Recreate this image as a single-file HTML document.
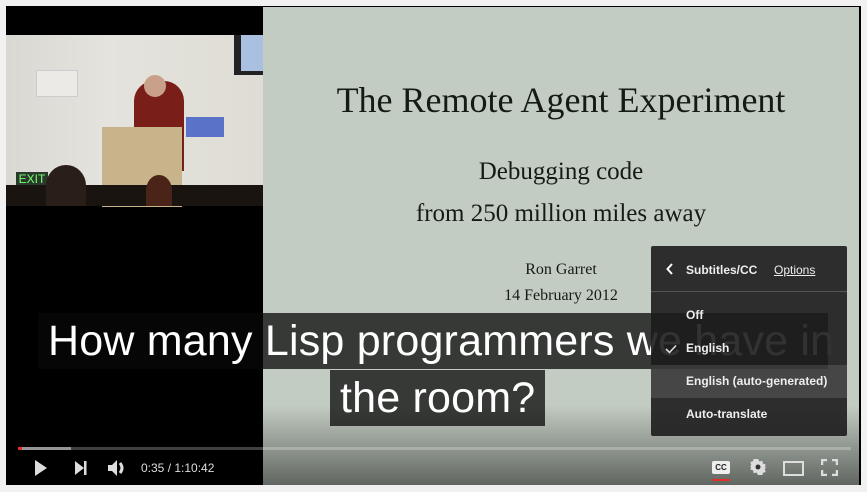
<!DOCTYPE html>
<html><head><style>
body{margin:0;width:867px;height:492px;background:#f1f1f1;position:relative;overflow:hidden;font-family:"Liberation Sans",sans-serif}
.v{position:absolute;left:6px;top:6px;width:855px;height:479px;background:#000;overflow:hidden}
.slide{position:absolute;left:257px;top:1px;width:596px;height:478px;background:#c3ccc3}
.cam{position:absolute;left:0;top:29px;width:257px;height:171px;background:linear-gradient(90deg,#d9d8d2 0,#e4e3dd 40%,#dedcd4 100%)}
.st{position:absolute;left:0;width:100%;text-align:center;font-family:"Liberation Serif",serif;color:#161a16}
.sub{position:absolute;background:rgba(8,8,8,.75);color:#fff;font-size:43px;line-height:56px;padding:0 10px;white-space:nowrap;letter-spacing:0.2px}
.grad{position:absolute;left:0;bottom:0;width:100%;height:80px;background:linear-gradient(rgba(0,0,0,0),rgba(0,0,0,.5))}
.menu{position:absolute;z-index:5;left:645px;top:240px;width:196px;height:190px;background:rgba(28,28,28,.9);color:#eee;font-size:12px;font-weight:bold;border-radius:2px}
.it{position:absolute;left:35px}
</style></head><body>
<div class="v">
 <div class="slide">
  <div class="st" style="top:72px;font-size:36px">The Remote Agent Experiment</div>
  <div class="st" style="top:151px;font-size:25px">Debugging code</div>
  <div class="st" style="top:193px;font-size:25px">from 250 million miles away</div>
  <div class="st" style="top:254px;font-size:16px">Ron Garret</div>
  <div class="st" style="top:280px;font-size:16px">14 February 2012</div>
 </div>
 <div class="cam">
  <div style="position:absolute;left:228px;top:0;width:29px;height:40px;background:#222"></div>
  <div style="position:absolute;left:235px;top:0;width:22px;height:36px;background:#a9c0e0"></div>
  <div style="position:absolute;left:30px;top:35px;width:40px;height:25px;background:#eceae6;border:1px solid #ccc"></div>
  <div style="position:absolute;left:128px;top:46px;width:50px;height:90px;background:#7a1e1a;border-radius:20px 20px 0 0"></div>
  <div style="position:absolute;left:138px;top:40px;width:22px;height:22px;background:#c9a08a;border-radius:50%"></div>
  <div style="position:absolute;left:96px;top:92px;width:80px;height:80px;background:#c8b48b"></div>
  <div style="position:absolute;left:180px;top:82px;width:38px;height:20px;background:#5a72c8"></div>
  <div style="position:absolute;left:10px;top:137px;width:32px;height:18px;background:#2a3a2a;color:#7f7;font-size:12px;text-align:center">EXIT</div>
  <div style="position:absolute;left:0;top:150px;width:257px;height:21px;background:#1a1410"></div>
  <div style="position:absolute;left:40px;top:130px;width:40px;height:41px;background:#2a1e18;border-radius:50% 50% 0 0"></div>
  <div style="position:absolute;left:140px;top:140px;width:26px;height:31px;background:#4a2418;border-radius:50% 50% 0 0"></div>
 </div>
 <div class="grad"></div>
 <div class="sub" style="left:32px;top:307px;width:770px">How many Lisp programmers we have in</div>
 <div class="sub" style="left:324px;top:364px">the room?</div>
 <div class="menu">
  <svg style="position:absolute;left:15px;top:17px" width="8" height="12"><path d="M6 1L1.5 6L6 11" stroke="#fff" stroke-width="2" fill="none"/></svg>
  <div class="it" style="top:17px">Subtitles/CC</div>
  <div style="position:absolute;left:123px;top:17px;text-decoration:underline;font-weight:normal">Options</div>
  <div style="position:absolute;left:0;top:45px;width:196px;height:1px;background:#555"></div>
  <div class="it" style="top:62px">Off</div>
  <svg style="position:absolute;left:14px;top:98px" width="12" height="10"><path d="M1 5L4.5 8.5L11 1.5" stroke="#ddd" stroke-width="1.6" fill="none"/></svg>
  <div class="it" style="top:95px">English</div>
  <div style="position:absolute;left:0;top:119px;width:196px;height:33px;background:rgba(255,255,255,.12)"></div>
  <div class="it" style="top:128px">English (auto-generated)</div>
  <div class="it" style="top:161px">Auto-translate</div>
 </div>
 <div style="position:absolute;left:12px;top:441px;width:833px;height:3px;background:rgba(255,255,255,.25)"></div>
 <div style="position:absolute;left:12px;top:441px;width:53px;height:3px;background:rgba(255,255,255,.45)"></div>
 <div style="position:absolute;left:12px;top:441px;width:4px;height:3px;background:#e52d27"></div>
 <svg style="position:absolute;left:28px;top:454px" width="14" height="16"><path d="M1 0L13 8L1 16Z" fill="#ddd"/></svg>
 <svg style="position:absolute;left:68px;top:455px" width="14" height="14"><path d="M1 0L10 7L1 14Z" fill="#ddd"/><rect x="10" y="0" width="2.5" height="14" fill="#ddd"/></svg>
 <svg style="position:absolute;left:101px;top:452px" width="20" height="20"><path d="M1 7H5L10 2V18L5 13H1Z" fill="#ddd"/><path d="M13 5Q17 10 13 15" stroke="#ddd" stroke-width="3" fill="none"/></svg>
 <div style="position:absolute;left:135px;top:455px;color:#ddd;font-size:12px">0:35 / 1:10:42</div>
 <div style="position:absolute;left:706px;top:455px;width:18px;height:13px;background:#eee;border-radius:2px;color:#222;font-size:8px;font-weight:bold;text-align:center;line-height:13px">CC</div>
 <div style="position:absolute;left:706px;top:473px;width:18px;height:2px;background:#e52d27"></div>
 <svg style="position:absolute;left:744px;top:453px" width="16" height="16" viewBox="0 0 16 16"><path d="M8 0l1.5 2.5 2.8-.8.6 2.9 2.8.9-.9 2.8L16 8l-1.2 2.2.9 2.8-2.8.9-.6 2.9-2.8-.8L8 16l-1.5-2.5-2.8.8-.6-2.9-2.8-.9.9-2.8L0 8l1.2-2.2-.9-2.8 2.8-.9.6-2.9 2.8.8z" fill="#ddd"/><circle cx="8" cy="8" r="2.5" fill="#333"/></svg>
 <div style="position:absolute;left:777px;top:455px;width:17px;height:11px;border:2px solid #ddd"></div>
 <svg style="position:absolute;left:815px;top:453px" width="17" height="17"><path d="M1 6V1H6M11 1H16V6M16 11V16H11M6 16H1V11" stroke="#ddd" stroke-width="2.5" fill="none"/></svg>
</div>
</body></html>
